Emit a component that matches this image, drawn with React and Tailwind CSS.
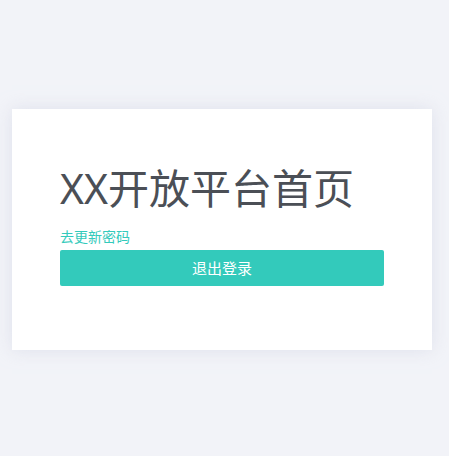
export default function App() {
  return (
    <div
      className="min-h-screen bg-[#f2f3f8] pt-[109px] px-3"
      style={{ fontFamily: '"Noto Sans", "Noto Sans CJK SC", sans-serif' }}
    >
      <div className="w-[420px] bg-white px-12 pt-[55px] pb-[64px] shadow-[0_0_16px_rgba(210,214,228,0.6)]">
        <h1 className="text-[41px] leading-[48px] text-[#4b4f56] font-normal">XX开放平台首页</h1>
        <a href="#" className="block mt-[15px] text-sm leading-[20px] text-[#33cabb]">
          去更新密码
        </a>
        <button className="mt-[3px] w-full h-9 rounded-[2px] bg-[#33cabb] text-white text-[15px]">
          退出登录
        </button>
      </div>
    </div>
  );
}
